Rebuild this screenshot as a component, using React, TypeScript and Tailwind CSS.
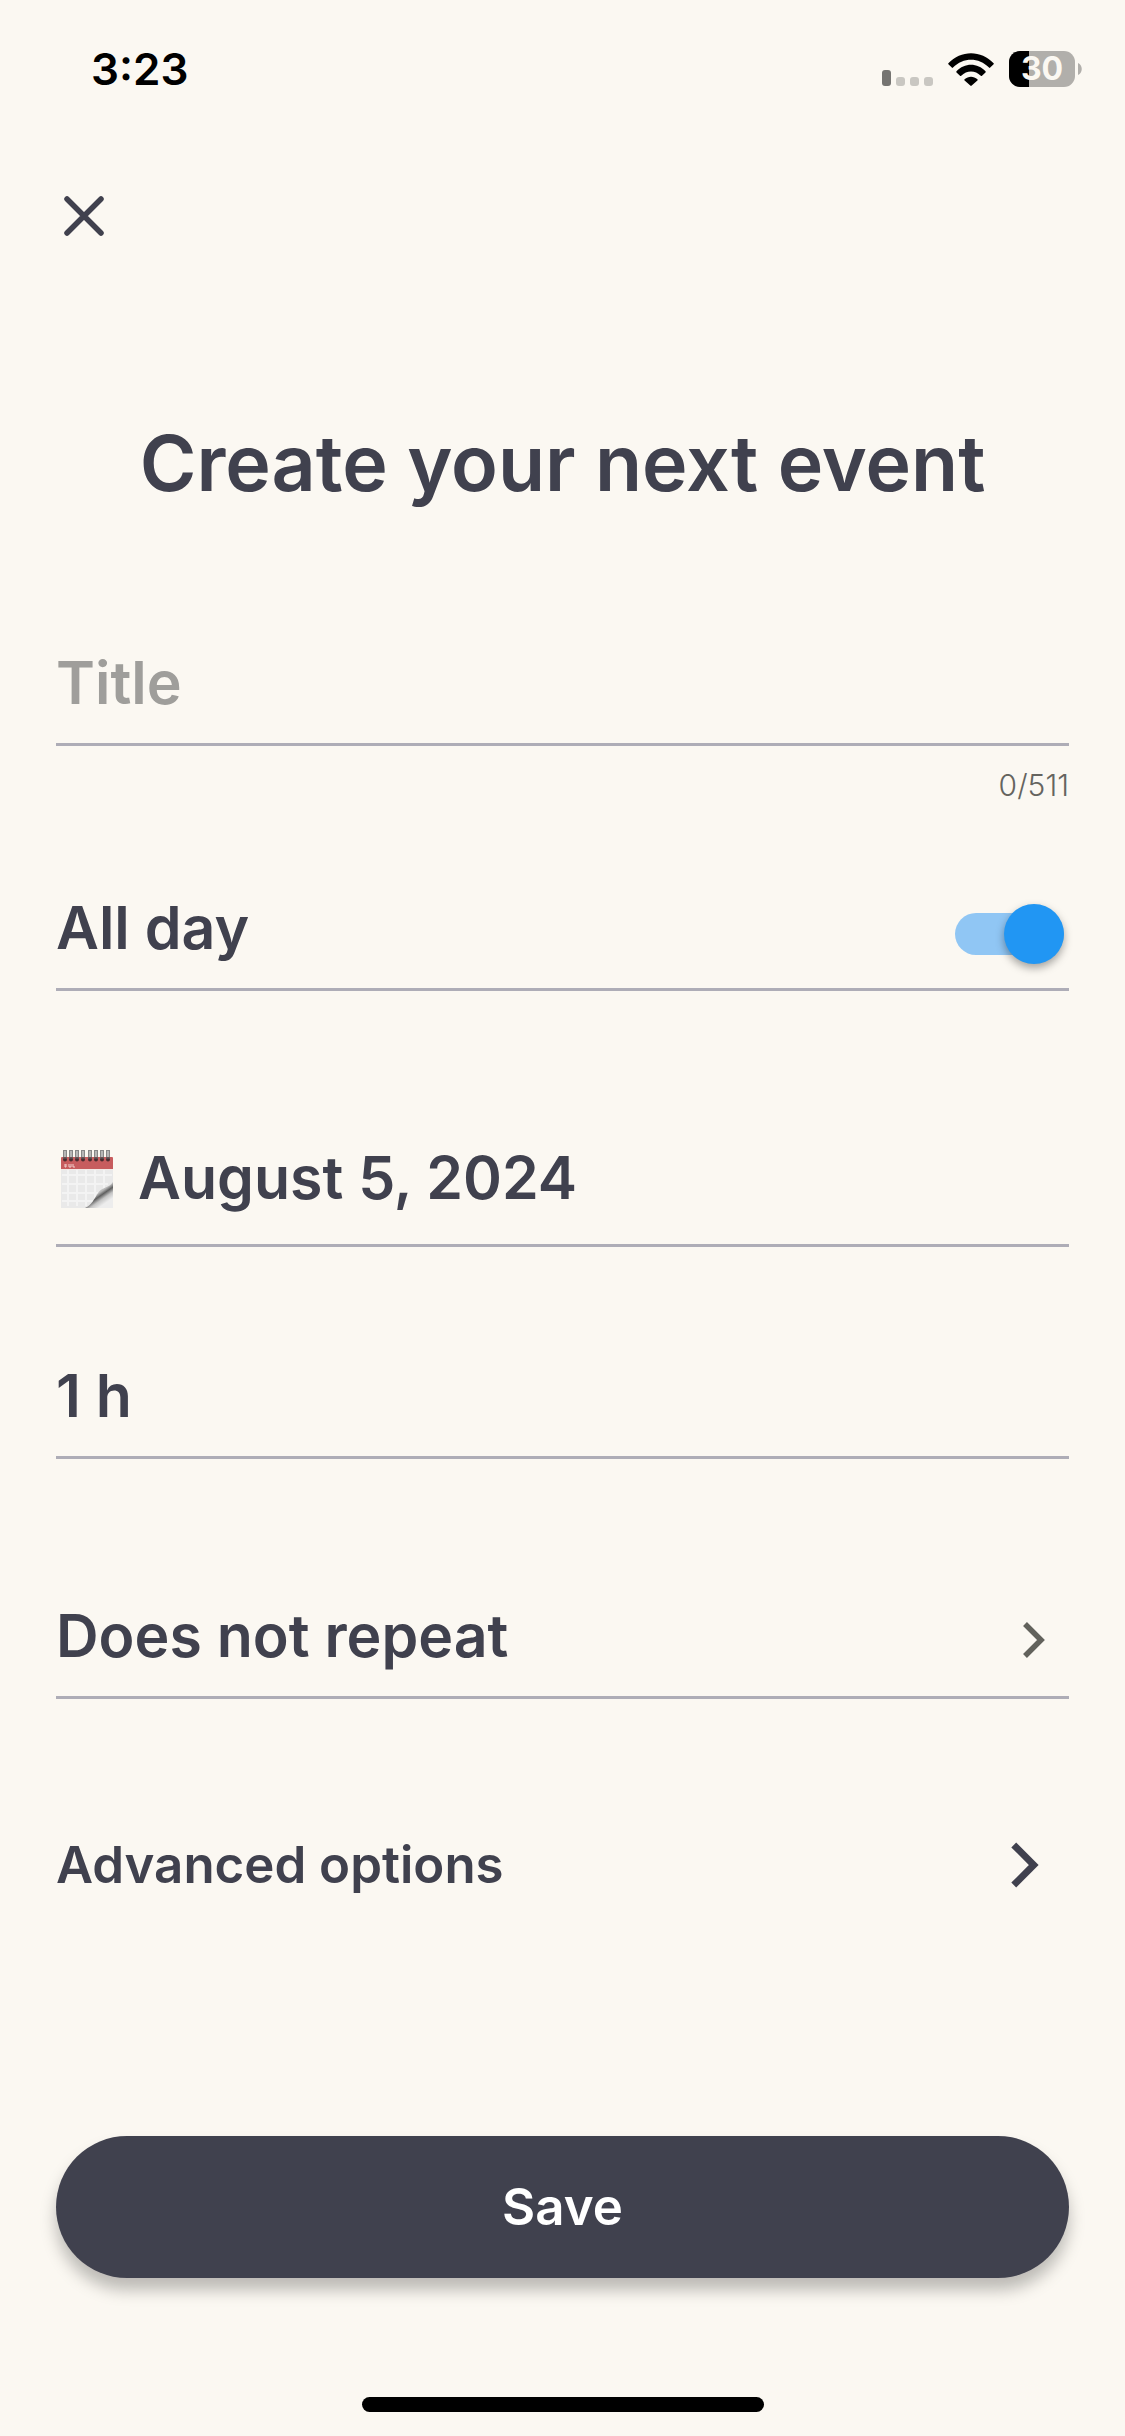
import { useState, type ReactNode } from 'react'

const rings = [5, 11, 17, 23, 30, 36, 42, 48]

function SignalIcon() {
  return (
    <div className="flex items-end gap-[5px]" aria-hidden="true">
      <span className="h-4 w-[9px] rounded-[3px] bg-[#757471]" />
      <span className="h-[9px] w-[9px] rounded-[3px] bg-[#c9c7c2]" />
      <span className="h-[9px] w-[9px] rounded-[3px] bg-[#c9c7c2]" />
      <span className="h-[9px] w-[9px] rounded-[3px] bg-[#c9c7c2]" />
    </div>
  )
}

function WifiIcon() {
  return (
    <svg viewBox="0 0 46 33" className="h-[33px] w-[46px]" aria-hidden="true">
      <path d="M0.4 10.2C12.6-3.2 33.4-3.2 45.6 10.2q.5.6 0 1.1l-3.4 3.3q-.6.6-1.2 0C30.8 4 15.2 4 5 14.6q-.6.6-1.2 0L.4 11.3q-.5-.5 0-1.1z" />
      <path d="M8.5 18.3C16.3 9.5 29.7 9.5 37.5 18.3q.5.6 0 1.1L34 22.8q-.6.5-1.2 0C27.2 17.1 18.8 17.1 13.2 22.8q-.6.5-1.2 0L8.5 19.4q-.5-.5 0-1.1z" />
      <path d="M16.6 26.3c3.6-3.4 9.2-3.4 12.8 0q.6.6 0 1.2l-5.7 5.1q-.7.6-1.4 0l-5.7-5.1q-.6-.6 0-1.2z" />
    </svg>
  )
}

function Battery({ level }: { level: number }) {
  return (
    <div className="flex items-center gap-[3px]">
      <div className="relative flex h-9 w-[66px] items-center justify-center rounded-[11px] bg-[#b1afab]">
        <span className="absolute inset-y-0 left-0 rounded-l-[11px] bg-black" style={{ width: `${level}%` }} />
        <span className="relative text-[32px] leading-10 font-bold text-[#fbf8f2]">{level}</span>
      </div>
      <svg viewBox="0 0 4 12" className="h-3 w-1" aria-hidden="true">
        <path d="M0 0c5 2 5 10 0 12z" fill="#b1afab" />
      </svg>
    </div>
  )
}

function CalendarIcon() {
  return (
    <svg viewBox="0 0 54 60" className="h-[60px] w-[54px]" aria-hidden="true">
      <defs>
        <linearGradient id="curl" x1="0.3" y1="0.2" x2="0.75" y2="0.8">
          <stop offset="0" stopColor="#fafafa" />
          <stop offset="0.4" stopColor="#b5b5b5" />
          <stop offset="0.55" stopColor="#5f5f5f" />
          <stop offset="0.75" stopColor="#c4c4c4" />
          <stop offset="1" stopColor="#ededed" />
        </linearGradient>
      </defs>
      <rect x="1" y="20" width="52" height="40" fill="#e9e9e9" />
      <path d="M8 21v37M17 21v37M26 21v37M35 21v32M44 21v24M2 27h50M2 36h46M2 45h38M2 53h32" stroke="#f3f3f3" strokeWidth="2" />
      <path d="M53 34c-4 6-11 5-15 11-4 6-6 12-13 15h28z" fill="url(#curl)" />
      <rect x="1" y="9" width="52" height="13" rx="1" fill="#c75c5e" />
      <path d="M1 21.5h52" stroke="#f3e9e6" strokeWidth="1" />
      <path d="M5 16v3h1v-3M9 16v3h2v-3M13 16v3h2" fill="none" stroke="#f0cfcc" strokeWidth="1" />
      {rings.map((x) => (
        <g key={x}>
          <circle cx={x} cy="11.5" r="2" fill="#4a2c30" />
          <path d={`M${x - 1} 2v9M${x + 1} 2v9`} stroke="#55575b" strokeWidth="1.4" />
          <path d={`M${x} 3v6`} stroke="#e6e6e6" strokeWidth="1" />
        </g>
      ))}
    </svg>
  )
}

function Chevron({ className }: { className: string }) {
  return (
    <svg viewBox="-9 -14 40 64" className={className} fill="none" stroke="currentColor" strokeWidth="5.5" aria-hidden="true">
      <path d="M2 2l16 16L2 34" />
    </svg>
  )
}

function Row({ className, children }: { className: string; children: ReactNode }) {
  return <div className={`flex border-b-3 border-[#aeadb7] ${className}`}>{children}</div>
}

export default function App() {
  const [title, setTitle] = useState('')
  const [allDay, setAllDay] = useState(true)

  return (
    <div className="flex min-h-screen flex-col bg-[#fbf8f2] font-['Inter',sans-serif] font-semibold text-[#40414e]">
      {/* Status bar */}
      <div className="flex h-[138px] items-center justify-between pr-[43px] pl-[91px] text-black">
        <span className="text-[44px] leading-[52px]">3:23</span>
        <div className="flex items-center gap-[15px]">
          <div className="flex items-end gap-[15px]">
            <SignalIcon />
            <WifiIcon />
          </div>
          <Battery level={30} />
        </div>
      </div>

      <form className="flex flex-1 flex-col px-14" onSubmit={(e) => e.preventDefault()}>
        <button type="button" aria-label="Close" className="mt-[50px] flex h-14 w-14 items-center justify-center">
          <svg viewBox="0 0 40 40" className="h-10 w-10" fill="none" stroke="currentColor" strokeWidth="5.5" strokeLinecap="round">
            <path d="M3 3l34 34M37 3L3 37" />
          </svg>
        </button>

        <h1 className="mt-[173px] text-center text-[77px] leading-[92px]">Create your next event</h1>

        <Row className="mt-[138px] pb-6">
          <input
            type="text"
            aria-label="Title"
            placeholder="Title"
            maxLength={511}
            value={title}
            onChange={(e) => setTitle(e.target.value)}
            className="h-[72px] w-full text-[59px] leading-[72px] outline-none placeholder:text-[#9f9e9b]"
          />
        </Row>
        <div className="mt-[21px] text-right text-[30px] leading-9 font-light text-[#65645f]">{title.length}/511</div>

        <Row className="mt-[89px] items-end justify-between pb-6">
          <label htmlFor="all-day" className="text-[59px] leading-[72px]">
            All day
          </label>
          <label className="relative mr-[5px] flex h-[60px] w-[109px] items-center">
            <input
              id="all-day"
              type="checkbox"
              role="switch"
              checked={allDay}
              onChange={(e) => setAllDay(e.target.checked)}
              className="peer sr-only"
            />
            <span className="h-[42px] w-full rounded-full bg-[#b9b8b5] peer-checked:bg-[#90c6f4]" />
            <span className="absolute left-0 h-[60px] w-[60px] rounded-full bg-white shadow-[0_4px_8px_rgba(0,0,0,.35)] peer-checked:left-[49px] peer-checked:bg-[#2196f3]" />
          </label>
        </Row>

        <Row className="mt-[151px] pb-[30px]">
          <button type="button" className="flex w-full items-center gap-6 pl-1 text-left text-[59px] leading-[72px]">
            <CalendarIcon />
            August 5, 2024
          </button>
        </Row>

        <Row className="mt-[113px] pb-6">
          <button type="button" className="w-full text-left text-[59px] leading-[72px]">
            1 h
          </button>
        </Row>

        <Row className="mt-[141px] pb-6">
          <button type="button" className="flex w-full items-end justify-between pr-[15px] text-left text-[59px] leading-[72px]">
            Does not repeat
            <Chevron className="h-16 w-10 text-[#62625c]" />
          </button>
        </Row>

        <button type="button" className="mt-[126px] flex w-full items-center justify-between pr-[19px] text-left text-[51px] leading-[64px]">
          Advanced options
          <Chevron className="h-20 w-[50px]" />
        </button>

        <button
          type="submit"
          className="mt-auto h-[142px] w-full rounded-full bg-[#40414e] text-[51px] leading-[64px] text-white shadow-[0_12px_16px_rgba(0,0,0,.25)]"
        >
          Save
        </button>
      </form>

      {/* Home indicator */}
      <div className="mx-auto mt-[119px] mb-6 h-[15px] w-[402px] rounded-full bg-black" />
    </div>
  )
}
